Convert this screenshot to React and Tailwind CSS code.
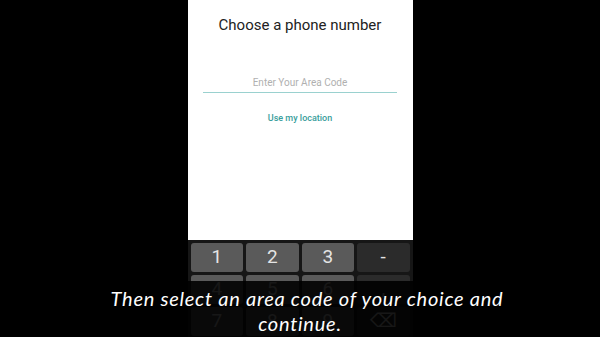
import React from 'react';

const keyRows = [
  ['1', '2', '3', '-'],
  ['4', '5', '6', ','],
  ['7', '8', '9', '⌫'],
];

const Key = ({ label, dark }) => (
  <div
    className={
      'flex h-[29px] items-center justify-center rounded-[3px] text-[19px] text-[#e4e4e4] ' +
      (dark ? 'bg-[#2b2b2b]' : 'bg-[#5a5a5a]')
    }
  >
    {label}
  </div>
);

const App = () => {
  return (
    <div className="relative flex h-[337px] w-[600px] justify-center overflow-hidden bg-black" style={{ fontFamily: 'Roboto, sans-serif' }}>
      <div className="flex w-[225px] flex-col">
        {/* phone screen */}
        <div className="flex h-[240px] flex-col items-center bg-white">
          <h1 className="mt-[14px] text-[15px] leading-[22px] text-[#222]">Choose a phone number</h1>
          <div className="mt-[41px] w-[194px] border-b border-[#9ad1cf] pb-[3px] text-center text-[10px] leading-[12px] text-[#b0b0b0]">
            Enter Your Area Code
          </div>
          <div className="mt-[20px] text-[9px] font-medium leading-[11px] text-[#3a9e9c]">Use my location</div>
        </div>

        {/* keypad */}
        <div className="flex flex-1 flex-col gap-[3px] bg-[#161616] px-[3px] pt-[3px]">
          {keyRows.map((row, i) => (
            <div key={i} className="grid grid-cols-4 gap-[3px]">
              {row.map((k, j) => (
                <Key key={k} label={k} dark={j === 3} />
              ))}
            </div>
          ))}
        </div>
      </div>

      {/* subtitle over the video */}
      <div className="absolute inset-x-0 bottom-0 top-[281px] flex flex-col items-center bg-black/90 pt-[5px] text-white">
        <p
          className="pl-[14px] text-[20px] italic leading-[25px] tracking-[0.75px]"
          style={{ fontFamily: 'Lato, sans-serif' }}
        >
          Then select an area code of your choice and
        </p>
        <p
          className="text-[20px] italic leading-[25px] tracking-[0.75px]"
          style={{ fontFamily: 'Lato, sans-serif' }}
        >
          continue.
        </p>
      </div>
    </div>
  );
};

export default App;
